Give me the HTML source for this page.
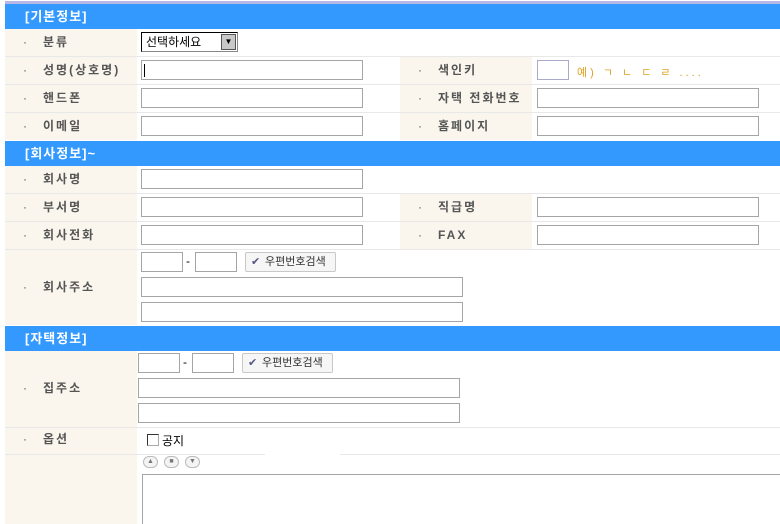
<!DOCTYPE html>
<html><head><meta charset="utf-8"><style>
html,body{margin:0;width:780px;height:524px;overflow:hidden;}
body{background:#fff;position:relative;font-family:"Liberation Sans","Noto Sans CJK KR",sans-serif;}
div,span{position:absolute;box-sizing:border-box;}
.h{left:5px;width:775px;height:25px;background:#3399ff;color:#fff;font-weight:bold;font-size:13px;line-height:25px;padding-left:20px;letter-spacing:1px;}
.lb{background:#faf6ed;font-size:12px;font-weight:bold;color:#555;letter-spacing:2px;}
.lb b{position:absolute;left:18px;font-weight:normal;}
.lb i{position:absolute;left:38px;font-style:normal;}
.ln{left:5px;width:775px;height:1px;background:#e8e8e8;}
.in{border:1px solid #a5a5a5;background:#fff;height:20px;}
.btn{border:1px solid #c8c8c8;background:#f6f6f6;font-size:11px;color:#333;height:20px;line-height:18px;padding-left:6px;border-radius:2px;}
.rb{width:15px;height:12px;border:1px solid #bbb;border-radius:6px;background:#f4f4f4;font-size:7px;color:#777;text-align:center;line-height:10px;}
</style></head><body>
<div style="left:5px;top:1px;width:775px;height:3px;background:#b8b8e8"></div>
<div class="h" style="top:4px">[기본정보]</div>
<div class="lb" style="left:5px;top:29px;width:132px;height:111px"></div>
<div class="lb" style="left:400px;top:57px;width:132px;height:83px"></div>
<div class="ln" style="top:56px"></div><div class="ln" style="top:84px"></div><div class="ln" style="top:112px"></div>
<div class="lb" style="left:5px;top:29px;width:132px;height:27px;line-height:27px;background:none"><b>·</b><i>분류</i></div>
<div class="lb" style="left:5px;top:57px;width:132px;height:27px;line-height:27px;background:none"><b>·</b><i>성명(상호명)</i></div>
<div class="lb" style="left:5px;top:85px;width:132px;height:27px;line-height:27px;background:none"><b>·</b><i>핸드폰</i></div>
<div class="lb" style="left:5px;top:113px;width:132px;height:27px;line-height:27px;background:none"><b>·</b><i>이메일</i></div>
<div class="lb" style="left:400px;top:57px;width:132px;height:27px;line-height:27px;background:none"><b>·</b><i>색인키</i></div>
<div class="lb" style="left:400px;top:85px;width:132px;height:27px;line-height:27px;background:none"><b>·</b><i>자택 전화번호</i></div>
<div class="lb" style="left:400px;top:113px;width:132px;height:27px;line-height:27px;background:none"><b>·</b><i>홈페이지</i></div>
<div style="left:141px;top:32px;width:97px;height:20px;border:1px solid #000;border-right-color:#888;border-bottom-color:#888;background:#fff;font-size:12px;line-height:18px;padding-left:4px">선택하세요<span style="right:1px;top:1px;width:15px;height:16px;background:#c8c8c8;border:1px solid #555;font-size:8px;line-height:14px;text-align:center">▼</span></div>
<div class="in" style="left:141px;top:60px;width:222px"><span style="left:2px;top:3px;width:1px;height:13px;background:#000"></span></div>
<div class="in" style="left:141px;top:88px;width:222px"></div>
<div class="in" style="left:141px;top:116px;width:222px"></div>
<div class="in" style="left:537px;top:60px;width:32px;border-color:#aac"></div>
<div style="left:577px;top:64px;font-size:11px;color:#e0a020;letter-spacing:3px">예) ㄱ ㄴ ㄷ ㄹ ....</div>
<div class="in" style="left:537px;top:88px;width:222px"></div>
<div class="in" style="left:537px;top:116px;width:222px"></div>
<div class="h" style="top:141px">[회사정보]~</div>
<div class="lb" style="left:5px;top:166px;width:132px;height:159px"></div>
<div class="lb" style="left:400px;top:194px;width:132px;height:55px"></div>
<div class="ln" style="top:193px"></div><div class="ln" style="top:221px"></div><div class="ln" style="top:249px"></div>
<div class="lb" style="left:5px;top:165px;width:132px;height:28px;line-height:28px;background:none"><b>·</b><i>회사명</i></div>
<div class="lb" style="left:5px;top:193px;width:132px;height:28px;line-height:28px;background:none"><b>·</b><i>부서명</i></div>
<div class="lb" style="left:5px;top:221px;width:132px;height:28px;line-height:28px;background:none"><b>·</b><i>회사전화</i></div>
<div class="lb" style="left:400px;top:193px;width:132px;height:28px;line-height:28px;background:none"><b>·</b><i>직급명</i></div>
<div class="lb" style="left:400px;top:221px;width:132px;height:28px;line-height:28px;background:none"><b>·</b><i>FAX</i></div>
<div class="lb" style="left:5px;top:249px;width:132px;height:76px;line-height:76px;background:none"><b>·</b><i>회사주소</i></div>
<div class="in" style="left:141px;top:169px;width:222px"></div>
<div class="in" style="left:141px;top:197px;width:222px"></div>
<div class="in" style="left:141px;top:225px;width:222px"></div>
<div class="in" style="left:537px;top:197px;width:222px"></div>
<div class="in" style="left:537px;top:225px;width:222px"></div>
<div class="in" style="left:141px;top:252px;width:42px"></div>
<div style="left:186px;top:254px;font-size:12px">-</div>
<div class="in" style="left:195px;top:252px;width:42px"></div>
<div class="btn" style="left:245px;top:252px;width:91px"><span style="left:5px;color:#558">✔</span><span style="left:19px">우편번호검색</span></div>
<div class="in" style="left:141px;top:277px;width:322px"></div>
<div class="in" style="left:141px;top:302px;width:322px"></div>
<div class="h" style="top:326px">[자택정보]</div>
<div class="lb" style="left:5px;top:351px;width:132px;height:173px"></div>
<div class="ln" style="top:427px"></div><div class="ln" style="top:454px;width:260px"></div><div class="ln" style="top:454px;left:340px;width:440px"></div>
<div class="lb" style="left:5px;top:350px;width:132px;height:77px;line-height:77px;background:none"><b>·</b><i>집주소</i></div>
<div class="lb" style="left:5px;top:427px;width:132px;height:27px;line-height:24px;background:none"><b>·</b><i>옵션</i></div>
<div class="in" style="left:138px;top:353px;width:42px"></div>
<div style="left:183px;top:355px;font-size:12px">-</div>
<div class="in" style="left:192px;top:353px;width:42px"></div>
<div class="btn" style="left:242px;top:353px;width:91px"><span style="left:5px;color:#558">✔</span><span style="left:19px">우편번호검색</span></div>
<div class="in" style="left:138px;top:378px;width:322px"></div>
<div class="in" style="left:138px;top:403px;width:322px"></div>
<div style="left:147px;top:434px;width:12px;height:12px;border:1px solid #333;border-right-color:#aaa;border-bottom-color:#aaa;background:#fff"></div>
<div style="left:162px;top:432px;font-size:12px">공지</div>
<div class="rb" style="left:143px;top:456px">▲</div>
<div class="rb" style="left:164px;top:456px">■</div>
<div class="rb" style="left:185px;top:456px">▼</div>
<div style="left:142px;top:474px;width:640px;height:50px;border:1px solid #a5a5a5;border-bottom:none;background:#fff"></div>
</body></html>
